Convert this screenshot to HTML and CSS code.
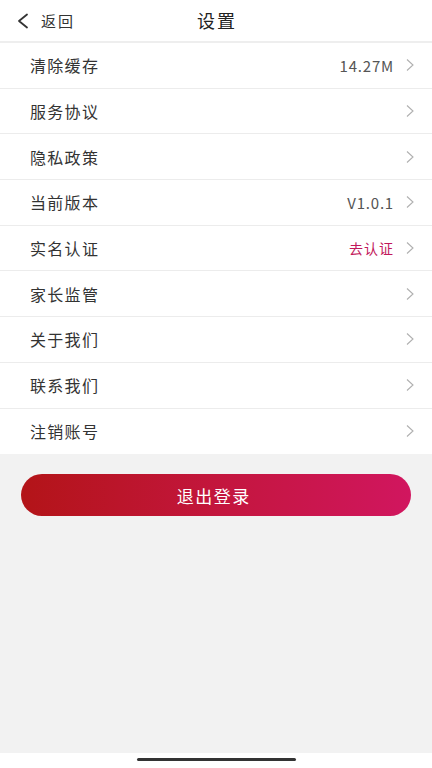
FILE: index.html
```html
<!DOCTYPE html>
<html lang="zh-CN">
<head>
<meta charset="utf-8">
<meta name="viewport" content="width=432">
<link rel="stylesheet" href="styles.css">
</head>
<body>
<div class="app">
  <header class="topbar">
    <div class="back">
      <svg class="back-icon" width="14" height="16" viewBox="0 0 14 16"><path d="M11 1.5 L3 8 L11 14.5" fill="none" stroke="#333" stroke-width="1.8" stroke-linecap="round" stroke-linejoin="round"/></svg>
      <span>返回</span>
    </div>
    <div class="title">设置</div>
  </header>
  <ul class="list">
    <li class="row"><span class="label">清除缓存</span><span class="value">14.27M</span><svg class="chev" viewBox="0 0 8 12"><path d="M1 0.5 L7 6 L1 11.5" fill="none" stroke="#b0b0b0" stroke-width="1.1"/></svg></li>
    <li class="row"><span class="label">服务协议</span><svg class="chev" viewBox="0 0 8 12"><path d="M1 0.5 L7 6 L1 11.5" fill="none" stroke="#b0b0b0" stroke-width="1.1"/></svg></li>
    <li class="row"><span class="label">隐私政策</span><svg class="chev" viewBox="0 0 8 12"><path d="M1 0.5 L7 6 L1 11.5" fill="none" stroke="#b0b0b0" stroke-width="1.1"/></svg></li>
    <li class="row"><span class="label">当前版本</span><span class="value">V1.0.1</span><svg class="chev" viewBox="0 0 8 12"><path d="M1 0.5 L7 6 L1 11.5" fill="none" stroke="#b0b0b0" stroke-width="1.1"/></svg></li>
    <li class="row"><span class="label">实名认证</span><span class="value accent">去认证</span><svg class="chev" viewBox="0 0 8 12"><path d="M1 0.5 L7 6 L1 11.5" fill="none" stroke="#b0b0b0" stroke-width="1.1"/></svg></li>
    <li class="row"><span class="label">家长监管</span><svg class="chev" viewBox="0 0 8 12"><path d="M1 0.5 L7 6 L1 11.5" fill="none" stroke="#b0b0b0" stroke-width="1.1"/></svg></li>
    <li class="row"><span class="label">关于我们</span><svg class="chev" viewBox="0 0 8 12"><path d="M1 0.5 L7 6 L1 11.5" fill="none" stroke="#b0b0b0" stroke-width="1.1"/></svg></li>
    <li class="row"><span class="label">联系我们</span><svg class="chev" viewBox="0 0 8 12"><path d="M1 0.5 L7 6 L1 11.5" fill="none" stroke="#b0b0b0" stroke-width="1.1"/></svg></li>
    <li class="row last"><span class="label">注销账号</span><svg class="chev" viewBox="0 0 8 12"><path d="M1 0.5 L7 6 L1 11.5" fill="none" stroke="#b0b0b0" stroke-width="1.1"/></svg></li>
  </ul>
  <main class="content">
    <button class="logout">退出登录</button>
  </main>
  <footer class="homebar"><div class="indicator"></div></footer>
</div>
</body>
</html>
```
FILE: styles.css
```css
* { box-sizing: border-box; }
html, body { margin: 0; padding: 0; }
body {
  font-family: "Noto Sans CJK SC", "Noto Sans", sans-serif;
  color: #333;
  background: #fff;
}
.app {
  width: 432px;
  height: 768px;
  display: flex;
  flex-direction: column;
}
.topbar {
  position: relative;
  height: 43px;
  border-bottom: 2px solid #eeeeee;
  display: flex;
  align-items: center;
  justify-content: center;
  flex-shrink: 0;
}
.back {
  position: absolute;
  left: 16px;
  top: 0;
  height: 41px;
  display: flex;
  align-items: center;
  gap: 11px;
  font-size: 15px;
  letter-spacing: 2px;
  color: #333;
}
.back-icon { width: 14px; height: 16px; }
.title {
  font-size: 18px;
  letter-spacing: 2px;
  color: #222;
  margin-top: -1px;
  margin-right: -2px;
}
.list {
  list-style: none;
  margin: 0;
  padding: 0;
  flex-shrink: 0;
}
.row {
  height: 45.7px;
  display: flex;
  align-items: center;
  padding: 0 18px 0 30px;
  border-bottom: 1px solid #ececec;
  background: #fff;
}
.row.last { border-bottom: none; }
.label {
  flex: 1;
  font-size: 16px;
  letter-spacing: 1.3px;
  color: #333;
}
.value {
  font-size: 15px;
  color: #555;
  margin-right: 12px;
  letter-spacing: 0.8px;
}
.value.accent {
  font-size: 14px;
  color: #c2185b;
  letter-spacing: 1px;
}
.chev { width: 8px; height: 12px; }
.content {
  flex: 1;
  background: #f2f2f2;
  padding: 20px 21px 0;
}
.logout {
  display: block;
  width: 100%;
  height: 42px;
  border: none;
  border-radius: 21px;
  background: linear-gradient(90deg, #b31418 0%, #c3163d 50%, #d1165f 100%);
  color: #fff;
  font-family: "Noto Sans CJK SC", "Noto Sans", sans-serif;
  font-size: 17px;
  letter-spacing: 1.5px;
  padding-left: 1.5px;
}
.homebar {
  height: 15px;
  background: #fff;
  display: flex;
  justify-content: center;
  padding-top: 5px;
  flex-shrink: 0;
}
.indicator {
  width: 159px;
  height: 3px;
  border-radius: 2px;
  background: #333;
}
```
